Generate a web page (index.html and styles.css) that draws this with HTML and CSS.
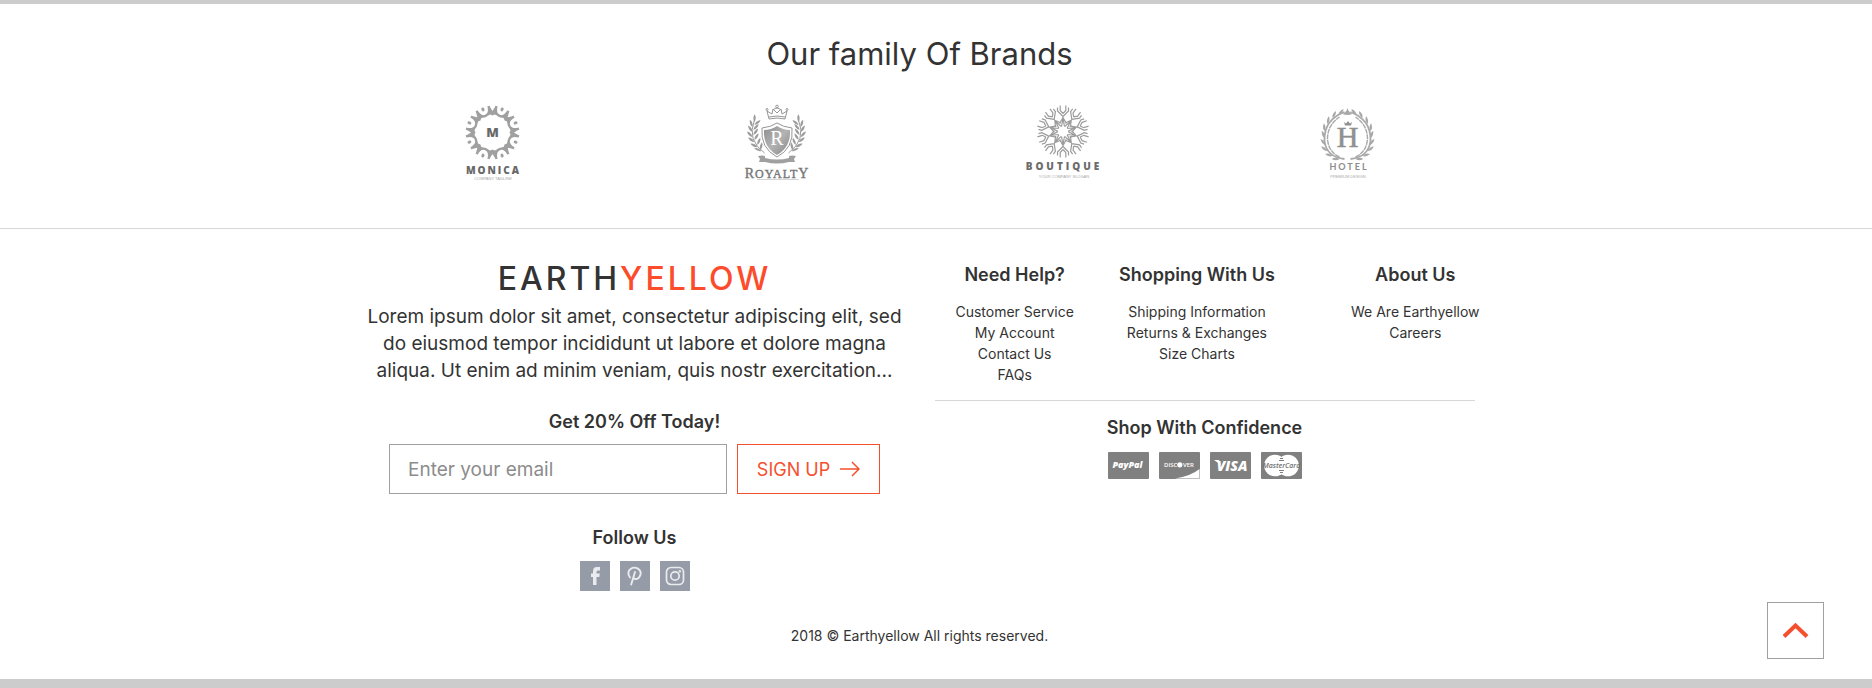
FILE: index.html
```html
<!DOCTYPE html>
<html lang="en">
<head>
<meta charset="utf-8">
<meta name="viewport" content="width=device-width, initial-scale=1">
<title>Earthyellow</title>
<link rel="stylesheet" href="styles.css">
</head>
<body>
<svg class="defs" width="0" height="0" aria-hidden="true">
  <defs>
    <linearGradient id="silver" x1="0" y1="0" x2="1" y2="1">
      <stop offset="0" stop-color="#8c8c8c"/><stop offset=".5" stop-color="#b4b4b4"/><stop offset="1" stop-color="#858585"/>
    </linearGradient>
    <g id="curl">
      <path d="M-6.500-26q1 8 6.500 8t6.500-8" transform="rotate(22.500)" fill="none" stroke-width="2.400"/>
      <ellipse cx="0" cy="-25" rx="1.500" ry="2" transform="rotate(22.500)" stroke="none"/>
      <path d="M-4.500-26l2 .5 2.500 4 2.500-4 2-.5-1.500 4 2 5-3-1-2 1-2-1-3 1 2-5z" stroke="none"/>
    </g>
    <g id="twig" fill="none">
      <path d="M0-14l-3.400 6M0-14l3.400 6M0-13l-1.500 8M0-13l1.500 8M0-13v-3M0-15l-5.500-5.500V-24M0-15l5.500-5.500V-24M0-18l-2.800-3V-26M0-18l2.800-3V-26"/>
    </g>
    <path id="leaf" d="M0 0q-4-1-5-6 4 1 5 6z"/>
    <g id="spray">
      <path d="M-8 17Q-26 4-18-16" fill="none" stroke-width="1"/>
      <g stroke="none">
        <use href="#leaf" transform="translate(-11 15) rotate(-30)"/><use href="#leaf" transform="translate(-15 11) rotate(-25)"/>
        <use href="#leaf" transform="translate(-18 6) rotate(-15)"/><use href="#leaf" transform="translate(-20 1) rotate(-5)"/>
        <use href="#leaf" transform="translate(-20 -4) rotate(5)"/><use href="#leaf" transform="translate(-20 -9) rotate(20)"/>
        <use href="#leaf" transform="translate(-18 -14) rotate(40)"/>
        <use href="#leaf" transform="translate(-12 14) rotate(50)"/><use href="#leaf" transform="translate(-15 9) rotate(60)"/>
        <use href="#leaf" transform="translate(-18 4) rotate(70)"/><use href="#leaf" transform="translate(-19 -1) rotate(75)"/>
        <use href="#leaf" transform="translate(-19 -6) rotate(80)"/><use href="#leaf" transform="translate(-18 -11) rotate(90)"/>
      </g>
    </g>
    <g id="branch">
      <path d="M-3 25Q-21 23-23 7-24-14-3-22" fill="none" stroke-width="1.800"/>
      <path d="M-8 23Q-19 18-20 5-20-9-8-17" fill="none" stroke-width="1.400" stroke-dasharray="5 .6"/>
      <g stroke="none">
        <use href="#leaf" transform="translate(-8 25) rotate(-50)"/><use href="#leaf" transform="translate(-15 22) rotate(-35)"/>
        <use href="#leaf" transform="translate(-20 17) rotate(-15)"/><use href="#leaf" transform="translate(-22 11)"/>
        <use href="#leaf" transform="translate(-23 4) rotate(20)"/><use href="#leaf" transform="translate(-23 -3) rotate(35)"/>
        <use href="#leaf" transform="translate(-20 -10) rotate(50)"/><use href="#leaf" transform="translate(-15 -16) rotate(65)"/>
        <use href="#leaf" transform="translate(-9 -19) rotate(80)"/>
      </g>
    </g>
  </defs>
</svg>

<section class="brands">
  <div class="container">
    <h2 class="brands-title">Our family Of Brands</h2>
    <ul class="brand-list">
      <li>
        <svg class="brand" viewBox="-3 0 110 100" role="img" aria-label="Monica">
          <g transform="translate(52.500 42.500)" fill="#a0a0a0" stroke="#a0a0a0">
            <use href="#curl"/><use href="#curl" transform="rotate(45)"/><use href="#curl" transform="rotate(90)"/><use href="#curl" transform="rotate(135)"/>
            <use href="#curl" transform="rotate(180)"/><use href="#curl" transform="rotate(225)"/><use href="#curl" transform="rotate(270)"/><use href="#curl" transform="rotate(315)"/>
          </g>
          <text class="heavy" x="52.500" y="47" font-size="13" fill="#686868">M</text>
          <text class="heavy spaced" x="53.500" y="84" font-size="10" fill="#686868">MONICA</text>
          <text class="tiny" x="53" y="90" font-size="4">COMPANY TAGLINE</text>
        </svg>
      </li>
      <li>
        <svg class="brand" viewBox="2 0 110 100" role="img" aria-label="Royalty">
          <g transform="translate(56.500 46)" fill="#9b9b9b" stroke="#9b9b9b"><use href="#spray" transform="translate(-4 0)"/><use href="#spray" transform="translate(4 0) scale(-1 1)"/></g>
          <g fill="none" stroke="#969696">
            <path d="M49 29l-2-8 5 3 1-5 4 4 4-4 1 5 5-3-2 8q-8-2-16 0z"/>
            <path d="M49 27q8-2 16 0" /><circle cx="57" cy="16.500" r="1.300"/><circle cx="47" cy="19.500" r="1"/><circle cx="67" cy="19.500" r="1"/><path d="M53 20q4-4 8 0"/>
            <path d="M57 33q6 4 15 5 2 20-15 29Q40 58 42 38q9-1 15-5z"/>
          </g>
          <path d="M57 36q6 4 13 4 1 17-13 25-14-8-13-25 7 0 13-4z" fill="url(#silver)"/>
          <text class="serif" x="57" y="55" font-size="20" fill="#fff">R</text>
          <path d="M38 66q4-1 7 0v2q12 3 24 0v-2q3-1 7 0l-2 3 1 3h-6q-12 3-24 0h-6l1-3z" fill="#a0a0a0"/>
          <text class="serif-bold royal" x="57" y="88" font-size="14" fill="#777">R<tspan font-size="12">OYALT</tspan>Y</text>
          <path d="M37 89.500h42" stroke="#b8b8b8" stroke-width=".6"/>
        </svg>
      </li>
      <li>
        <svg class="brand" viewBox="-3 0 110 100" role="img" aria-label="Boutique">
          <g transform="translate(53 41.500)" stroke="#9c9c9c" stroke-width="1.200">
            <use href="#twig"/><use href="#twig" transform="rotate(36)"/><use href="#twig" transform="rotate(72)"/><use href="#twig" transform="rotate(108)"/><use href="#twig" transform="rotate(144)"/>
            <use href="#twig" transform="rotate(180)"/><use href="#twig" transform="rotate(216)"/><use href="#twig" transform="rotate(252)"/><use href="#twig" transform="rotate(288)"/><use href="#twig" transform="rotate(324)"/>
          </g>
          <text class="heavy wide" x="54" y="80" font-size="10" fill="#6c6c6c">BOUTIQUE</text>
          <text class="tiny" x="54" y="88" font-size="4">YOUR COMPANY SLOGAN</text>
        </svg>
      </li>
      <li>
        <svg class="brand" viewBox="-8 0 110 100" role="img" aria-label="Hotel">
          <g transform="translate(47.500 44)" fill="#a8a8a8" stroke="#a8a8a8"><use href="#branch"/><use href="#branch" transform="scale(-1 1)"/><path d="M-5-20q4-2 5-6 1 4 5 6-5 2-10 0z" stroke="none"/></g>
          <path d="M44 32l2 1.500 2-2.500 2 2.500 2-1.500-1 3.500h-6z" fill="#909090"/>
          <text class="serif" x="47.500" y="57" font-size="30" fill="#909090" stroke="#909090" stroke-width=".6">H</text>
          <text class="sans spaced" x="49" y="80" font-size="9" fill="#8c8c8c">HOTEL</text>
          <text class="tiny" x="48" y="88" font-size="4">PREMIUM DESIGN</text>
        </svg>
      </li>
    </ul>
  </div>
</section>

<footer class="footer">
  <div class="container">
    <div class="footer-cols">
      <div class="about">
        <div class="logo">EARTH<span>YELLOW</span></div>
        <p class="intro">Lorem ipsum dolor sit amet, consectetur adipiscing elit, sed do eiusmod tempor incididunt ut labore et dolore magna aliqua. Ut enim ad minim veniam, quis nostr exercitation...</p>
        <form class="signup">
          <label class="heading" for="email">Get 20% Off Today!</label>
          <div class="signup-row">
            <input id="email" type="email" placeholder="Enter your email">
            <button type="button">SIGN UP
              <svg width="20" height="16" viewBox="0 0 20 16" fill="none" stroke="currentColor" stroke-width="1.500" aria-hidden="true"><path d="M0 8h19M12 1l7 7-7 7"/></svg>
            </button>
          </div>
        </form>
        <h3 class="heading">Follow Us</h3>
        <div class="social">
          <a href="#" aria-label="Facebook"><svg viewBox="0 0 30 30"><path d="M13 24v-8h-2v-3.500h2V10q0-4 4-4h3v3.500h-2q-1.500 0-1.500 1.500v1.500h3.300L19.300 16h-2.800v8z" fill="#e9ebee"/></svg></a>
          <a href="#" aria-label="Pinterest"><svg viewBox="0 0 30 30" fill="none" stroke="#e9ebee" stroke-width="1.900" stroke-linecap="round"><path d="M10 16.500C4.500 9 14 4 19 8.500c4 4-.5 12-5.200 8.700M15 11l-3.800 12.500"/></svg></a>
          <a href="#" aria-label="Instagram"><svg viewBox="0 0 30 30" fill="none" stroke="#e9ebee" stroke-width="1.700"><rect x="6.500" y="6.500" width="17" height="17" rx="4.500"/><circle cx="15" cy="15" r="4.200"/><circle cx="19.800" cy="10.300" r=".5"/></svg></a>
        </div>
      </div>
      <div class="help">
        <nav class="link-cols">
          <div><h3 class="heading">Need Help?</h3>
            <ul><li><a href="#">Customer Service</a></li><li><a href="#">My Account</a></li><li><a href="#">Contact Us</a></li><li><a href="#">FAQs</a></li></ul></div>
          <div><h3 class="heading">Shopping With Us</h3>
            <ul><li><a href="#">Shipping Information</a></li><li><a href="#">Returns &amp; Exchanges</a></li><li><a href="#">Size Charts</a></li></ul></div>
          <div><h3 class="heading">About Us</h3>
            <ul><li><a href="#">We Are Earthyellow</a></li><li><a href="#">Careers</a></li></ul></div>
        </nav>
        <div class="confidence">
          <h3 class="heading">Shop With Confidence</h3>
          <div class="cards">
            <svg viewBox="0 0 41 27" role="img" aria-label="PayPal"><rect width="41" height="27" rx="1" fill="#808080"/><text class="card-text" x="19.500" y="16" font-size="9">PayPal</text></svg>
            <svg viewBox="0 0 41 27" role="img" aria-label="Discover"><rect width="41" height="27" rx="1" fill="#808080"/><path d="M16 26.500Q32 24 40.500 17v9.500z" fill="#fff"/><text class="card-plain" x="5" y="15" font-size="6">DISC</text><circle cx="20.800" cy="12.800" r="2.600" fill="#fff"/><text class="card-plain" x="24" y="15" font-size="6">VER</text></svg>
            <svg viewBox="0 0 41 27" role="img" aria-label="Visa"><rect width="41" height="27" rx="1" fill="#808080"/><path d="M4 8h5l2 5z" fill="#fff"/><text class="card-text" x="22" y="19" font-size="14">VISA</text></svg>
            <svg viewBox="0 0 41 27" role="img" aria-label="MasterCard"><rect width="41" height="27" rx="1" fill="#808080"/><circle cx="14" cy="13.500" r="10.800" fill="#fff"/><circle cx="27" cy="13.500" r="10.800" fill="#fff"/><path d="M19 6.500h3M18 8.500h5M18 18.500h5M19 20.500h3" stroke="#808080"/><text class="card-text dark" x="20.500" y="16" font-size="7">MasterCard</text></svg>
          </div>
        </div>
      </div>
    </div>
    <p class="copyright">2018 © Earthyellow All rights reserved.</p>
  </div>
</footer>
<button class="to-top" type="button" aria-label="Back to top"><svg width="27" height="17" viewBox="0 0 27 17" fill="none" stroke="#f5502e" stroke-width="4" aria-hidden="true"><path d="M2 14.500L13.500 3.500 25 14.500"/></svg></button>
</body>
</html>
```
FILE: styles.css
```css
* { box-sizing: border-box; }

body {
  margin: 0;
  min-height: 100vh;
  display: flex;
  flex-direction: column;
  border-top: 4px solid #ccc;
  border-bottom: 9px solid #ccc;
  background: #fff;
  color: #333;
  font: 18px/27px Inter, "Noto Sans", sans-serif;
}

h2, h3, p, ul { margin: 0; padding: 0; font-weight: 400; }
ul { list-style: none; }
a { color: inherit; text-decoration: none; }
.defs { position: absolute; }

.brands, .footer { padding-right: 33px; }
.brands { border-bottom: 1px solid #d8d8d8; padding-top: 28px; padding-bottom: 38px; }
.container { max-width: 1140px; margin: 0 auto; }
.brands-title { font-size: 31px; line-height: 44px; text-align: center; }

.brand-list { display: grid; grid-template-columns: repeat(4, 1fr); margin-top: 14px; }
.brand-list li { display: flex; justify-content: center; }
.brand { width: 110px; height: 100px; }
.brand text { text-anchor: middle; }
.serif, .serif-bold { font-family: "Liberation Serif", serif; }
.royal { letter-spacing: 1px; stroke: #777; stroke-width: .4px; }
.heavy { font-family: "Open Sans", sans-serif; font-weight: 800; }
.sans { font-family: Lato, sans-serif; font-weight: 700; }
.spaced { letter-spacing: 2px; }
.wide { letter-spacing: 3px; }
.tiny { font-family: "Liberation Sans", sans-serif; fill: #a8a8a8; }

.footer { padding-top: 32px; }
.footer-cols { display: grid; grid-template-columns: 1fr 1fr; text-align: center; }
.heading { display: block; font-size: 18px; line-height: 27px; font-weight: 600; }

.logo { font-size: 32px; line-height: 36px; font-weight: 500; letter-spacing: 3px; }
.logo span { color: #fc4c2c; }
.intro { padding: 6px 15px 0; font-size: 19px; }
.signup { margin-top: 24px; }
.signup-row { display: flex; justify-content: center; gap: 10px; margin-top: 9px; }
.signup input {
  width: 338px;
  height: 50px;
  padding: 0 18px;
  border: 1px solid #a0a0a0;
  background: #fff;
  font: inherit;
  font-size: 19px;
}
.signup input::placeholder { color: #8c8c8c; opacity: 1; }
.signup button {
  display: flex;
  align-items: center;
  justify-content: center;
  gap: 10px;
  width: 143px;
  height: 50px;
  padding: 0;
  border: 1px solid #f5502e;
  background: #fff;
  color: #f5502e;
  font: inherit;
}
.about h3 { margin-top: 30px; }
.social { display: flex; justify-content: center; gap: 10px; margin-top: 10px; }
.social a { width: 30px; height: 30px; background: #959ca8; }
.social svg { display: block; }

.link-cols { display: grid; grid-template-columns: 190fr 174fr 262fr; width: 110%; }
.link-cols ul { margin-top: 13px; font-size: 14px; line-height: 21px; }
.link-cols li { white-space: nowrap; }
.confidence { margin: 15px 15px 0; padding-top: 13px; border-top: 1px solid #d8d8d8; }
.cards { display: flex; justify-content: center; gap: 10px; margin-top: 11px; }
.cards svg { width: 41px; height: 27px; }
.card-text { font-family: "Open Sans", sans-serif; font-style: italic; font-weight: 800; fill: #fff; text-anchor: middle; }
.card-plain { font-family: "Open Sans", sans-serif; font-weight: 600; fill: #fff; }
.card-text.dark { fill: #707070; font-weight: 600; }

.copyright { margin-top: 34px; font-size: 14px; line-height: 21px; text-align: center; }

.to-top {
  position: fixed;
  right: 48px;
  bottom: 29px;
  display: flex;
  align-items: center;
  justify-content: center;
  width: 57px;
  height: 57px;
  padding: 0;
  border: 1px solid #a0a0a0;
  background: #fff;
}
```
